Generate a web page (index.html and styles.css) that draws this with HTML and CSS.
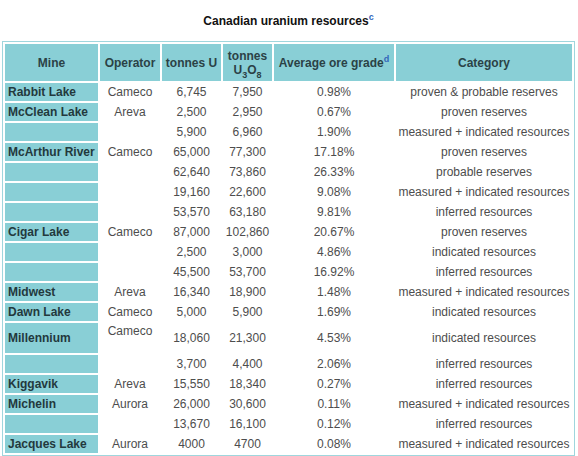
FILE: index.html
```html
<!DOCTYPE html>
<html lang="en">
<head>
    <meta charset="UTF-8">
    <title>Canadian uranium resources</title>
    <link rel="stylesheet" href="styles.css">
</head>
<body>
    <table class="resources">
        <caption>Canadian uranium resources<sup class="ref">c</sup></caption>
        <colgroup>
            <col class="col-mine">
            <col class="col-op">
            <col class="col-tu">
            <col class="col-tuo">
            <col class="col-grade">
            <col class="col-cat">
        </colgroup>
        <thead>
            <tr>
                <th>Mine</th>
                <th>Operator</th>
                <th>tonnes U</th>
                <th>tonnes<br>U<sub>3</sub>O<sub>8</sub></th>
                <th>Average ore grade<sup class="ref">d</sup></th>
                <th>Category</th>
            </tr>
        </thead>
        <tbody>
            <tr><td class="mine">Rabbit Lake</td><td>Cameco</td><td>6,745</td><td>7,950</td><td>0.98%</td><td>proven &amp; probable reserves</td></tr>
            <tr><td class="mine">McClean Lake</td><td>Areva</td><td>2,500</td><td>2,950</td><td>0.67%</td><td>proven reserves</td></tr>
            <tr><td class="mine"></td><td></td><td>5,900</td><td>6,960</td><td>1.90%</td><td>measured + indicated resources</td></tr>
            <tr><td class="mine">McArthur River</td><td>Cameco</td><td>65,000</td><td>77,300</td><td>17.18%</td><td>proven reserves</td></tr>
            <tr><td class="mine"></td><td></td><td>62,640</td><td>73,860</td><td>26.33%</td><td>probable reserves</td></tr>
            <tr><td class="mine"></td><td></td><td>19,160</td><td>22,600</td><td>9.08%</td><td>measured + indicated resources</td></tr>
            <tr><td class="mine"></td><td></td><td>53,570</td><td>63,180</td><td>9.81%</td><td>inferred resources</td></tr>
            <tr><td class="mine">Cigar Lake</td><td>Cameco</td><td>87,000</td><td>102,860</td><td>20.67%</td><td>proven reserves</td></tr>
            <tr><td class="mine"></td><td></td><td>2,500</td><td>3,000</td><td>4.86%</td><td>indicated resources</td></tr>
            <tr><td class="mine"></td><td></td><td>45,500</td><td>53,700</td><td>16.92%</td><td>inferred resources</td></tr>
            <tr><td class="mine">Midwest</td><td>Areva</td><td>16,340</td><td>18,900</td><td>1.48%</td><td>measured + indicated resources</td></tr>
            <tr><td class="mine">Dawn Lake</td><td>Cameco</td><td>5,000</td><td>5,900</td><td>1.69%</td><td>indicated resources</td></tr>
            <tr><td class="mine">Millennium</td><td class="two-line">Cameco<br>&nbsp;</td><td>18,060</td><td>21,300</td><td>4.53%</td><td>indicated resources</td></tr>
            <tr><td class="mine"></td><td></td><td>3,700</td><td>4,400</td><td>2.06%</td><td>inferred resources</td></tr>
            <tr><td class="mine">Kiggavik</td><td>Areva</td><td>15,550</td><td>18,340</td><td>0.27%</td><td>inferred resources</td></tr>
            <tr><td class="mine">Michelin</td><td>Aurora</td><td>26,000</td><td>30,600</td><td>0.11%</td><td>measured + indicated resources</td></tr>
            <tr><td class="mine"></td><td></td><td>13,670</td><td>16,100</td><td>0.12%</td><td>inferred resources</td></tr>
            <tr><td class="mine">Jacques Lake</td><td>Aurora</td><td>4000</td><td>4700</td><td>0.08%</td><td>measured + indicated resources</td></tr>
        </tbody>
    </table>
</body>
</html>
```
FILE: styles.css
```css
body {
    margin: 0;
    padding: 0 2px;
    background: #ffffff;
    font-family: "Liberation Sans", Arial, sans-serif;
    font-size: 12px;
    color: #4d4d4d;
}

.resources {
    border: 1px solid #9fd6dd;
    border-spacing: 2px;
    table-layout: fixed;
    width: 573px;
}

caption {
    font-weight: bold;
    color: #111111;
    line-height: 14px;
    padding: 14px 0 13px;
}

sup.ref {
    color: #3366bb;
    font-size: 9px;
    line-height: 0;
    vertical-align: 5px;
}

.col-mine { width: 93px; }
.col-op { width: 60px; }
.col-tu { width: 59px; }
.col-tuo { width: 49px; }
.col-grade { width: 120px; }
.col-cat { width: 176px; }

th {
    background: #89cfd6;
    color: #2b4246;
    font-weight: bold;
    height: 37px;
    padding: 0;
    line-height: 14px;
}

th sub {
    font-size: 9px;
    line-height: 0;
    vertical-align: -4px;
}

td {
    padding: 2px 0;
    line-height: 14px;
    text-align: center;
    white-space: nowrap;
}

td.two-line {
    line-height: 13px;
}

td.mine {
    background: #89cfd6;
    color: #23393d;
    font-weight: bold;
    text-align: left;
    padding-left: 3px;
}
```
